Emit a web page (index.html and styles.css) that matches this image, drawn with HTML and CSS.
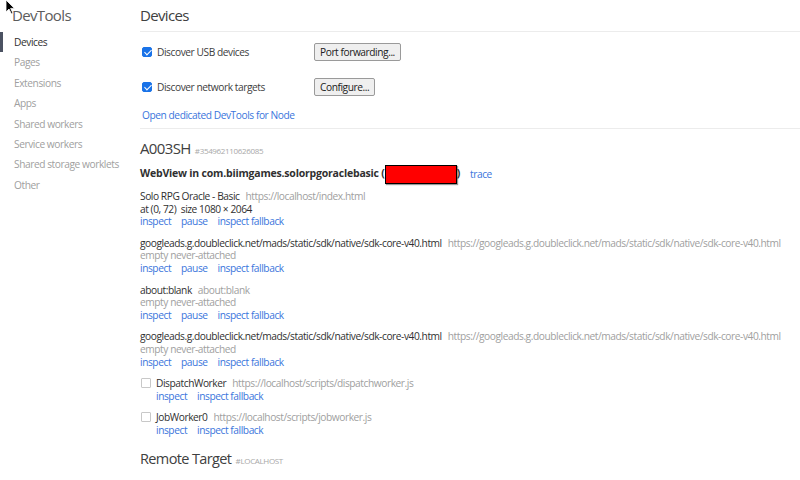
FILE: index.html
```html
<!DOCTYPE html>
<html lang="en">
<head>
    <meta charset="UTF-8">
    <title>Inspect with Chrome Developer Tools</title>
    <link rel="stylesheet" href="styles.css">
</head>
<body>
<div class="sidebar">
    <div class="sidebar-title">DevTools</div>
    <div class="nav-item selected">Devices</div>
    <div class="nav-item">Pages</div>
    <div class="nav-item">Extensions</div>
    <div class="nav-item">Apps</div>
    <div class="nav-item">Shared workers</div>
    <div class="nav-item">Service workers</div>
    <div class="nav-item">Shared storage worklets</div>
    <div class="nav-item">Other</div>
</div>

<div class="content">
    <div class="content-header">Devices</div>

    <div class="config-row first">
        <label class="checkbox-label"><span class="checkbox checked"></span>Discover USB devices</label>
        <span class="button">Port forwarding...</span>
    </div>
    <div class="config-row">
        <label class="checkbox-label"><span class="checkbox checked"></span>Discover network targets</label>
        <span class="button">Configure...</span>
    </div>
    <div class="node-link"><a href="#">Open dedicated DevTools for Node</a></div>

    <div class="device">
        <div class="device-header">
            <span class="device-name">A003SH</span>
            <span class="device-serial">#354962110626085</span>
        </div>
        <div class="browser-header">
            <span class="browser-name">WebView in com.biimgames.solorpgoraclebasic (<span class="redacted"></span>)</span>
            <a href="#" class="action">trace</a>
        </div>

        <div class="row">
            <div><span class="name">Solo RPG Oracle - Basic</span><span class="url">https://localhost/index.html</span></div>
            <div class="name">at (0, 72)&nbsp; size 1080 × 2064</div>
            <div class="actions"><a href="#">inspect</a><a href="#">pause</a><a href="#">inspect fallback</a></div>
        </div>
        <div class="row">
            <div><span class="name">googleads.g.doubleclick.net/mads/static/sdk/native/sdk-core-v40.html</span><span class="url">https://googleads.g.doubleclick.net/mads/static/sdk/native/sdk-core-v40.html</span></div>
            <div class="url">empty never-attached</div>
            <div class="actions"><a href="#">inspect</a><a href="#">pause</a><a href="#">inspect fallback</a></div>
        </div>
        <div class="row">
            <div><span class="name">about:blank</span><span class="url">about:blank</span></div>
            <div class="url">empty never-attached</div>
            <div class="actions"><a href="#">inspect</a><a href="#">pause</a><a href="#">inspect fallback</a></div>
        </div>
        <div class="row">
            <div><span class="name">googleads.g.doubleclick.net/mads/static/sdk/native/sdk-core-v40.html</span><span class="url">https://googleads.g.doubleclick.net/mads/static/sdk/native/sdk-core-v40.html</span></div>
            <div class="url">empty never-attached</div>
            <div class="actions"><a href="#">inspect</a><a href="#">pause</a><a href="#">inspect fallback</a></div>
        </div>

        <div class="row worker">
            <div><span class="checkbox"></span><span class="name">DispatchWorker</span><span class="url">https://localhost/scripts/dispatchworker.js</span></div>
            <div class="actions"><a href="#">inspect</a><a href="#">inspect fallback</a></div>
        </div>
        <div class="row worker">
            <div><span class="checkbox"></span><span class="name">JobWorker0</span><span class="url">https://localhost/scripts/jobworker.js</span></div>
            <div class="actions"><a href="#">inspect</a><a href="#">inspect fallback</a></div>
        </div>
    </div>

    <div class="device-header remote">
        <span class="device-name">Remote Target</span>
        <span class="device-serial">#LOCALHOST</span>
    </div>
</div>

<svg class="cursor" viewBox="0 0 12 16" xmlns="http://www.w3.org/2000/svg">
    <path d="M1 0 L1 12 L4 9 L6.5 14 L8 13.3 L5.6 8.4 L9.5 8.4 Z" fill="#000" stroke="#fff" stroke-width="0.8"></path>
</svg>
</body>
</html>
```

FILE: styles.css
```css
* {
    letter-spacing: -0.043em;
}

body {
    margin: 0;
    padding: 0;
    display: flex;
    font-family: "Open Sans", "Noto Sans", sans-serif;
    font-size: 10.2px;
    color: #303030;
    background: #fff;
    height: 480px;
    overflow: hidden;
}

a {
    color: #3a75dc;
    text-decoration: none;
}

/* Sidebar */
.sidebar {
    width: 130px;
    flex-shrink: 0;
}

.sidebar-title {
    font-size: 15px;
    line-height: 30px;
    padding-left: 12px;
    color: #5c5c5c;
    margin-bottom: 2px;
}

.nav-item {
    line-height: 20.4px;
    padding-left: 14px;
    color: #a0a0a0;
    white-space: nowrap;
}

.nav-item.selected {
    color: #303030;
    border-left: 3px solid #4b5262;
    padding-left: 11px;
}

/* Content */
.content {
    flex: 1;
    padding-left: 10px;
    min-width: 0;
}

.content-header {
    font-size: 15px;
    line-height: 31px;
    color: #404040;
    border-bottom: 1px solid #ececec;
}

.config-row {
    display: flex;
    align-items: center;
    height: 18px;
    margin-top: 17px;
    padding-left: 2px;
}

.config-row.first {
    margin-top: 11px;
}

.checkbox-label {
    display: flex;
    align-items: center;
    width: 172px;
    color: #404040;
}

.checkbox {
    display: inline-block;
    box-sizing: border-box;
    width: 10px;
    height: 10px;
    border: 1px solid #c8c8c8;
    border-radius: 1px;
    background: #fff;
    margin-right: 5px;
    vertical-align: -1px;
    position: relative;
}

.checkbox.checked {
    background: #1a73e8;
    border-color: #1a73e8;
    border-radius: 2px;
}

.checkbox.checked::after {
    content: '';
    position: absolute;
    left: 2.5px;
    top: 0px;
    width: 3px;
    height: 6px;
    border: solid #fff;
    border-width: 0 1.5px 1.5px 0;
    transform: rotate(45deg);
}

.button {
    display: inline-block;
    box-sizing: border-box;
    height: 18px;
    line-height: 16px;
    padding: 0 5px;
    border: 1px solid #9a9a9a;
    border-radius: 2px;
    background: #efefef;
    color: #202020;
}

.node-link {
    line-height: 13px;
    margin-top: 13px;
    padding-left: 2px;
    padding-bottom: 6px;
    border-bottom: 1px solid #ececec;
}

/* Device */
.device-header {
    height: 20px;
    line-height: 20px;
    margin-top: 9px;
}

.device-name {
    font-size: 15px;
    color: #404040;
}

.device-serial {
    font-size: 8px;
    color: #a8a8a8;
    margin-left: 2px;
}

.browser-header {
    display: flex;
    align-items: center;
    height: 20px;
    margin-top: 6px;
}

.browser-name {
    font-weight: bold;
    font-size: 10.5px;
    color: #303030;
}

.browser-name,
.browser-name * {
    letter-spacing: -0.2px;
}

.redacted {
    display: inline-block;
    width: 70px;
    height: 17px;
    background: #ff0000;
    border: 1px solid #000;
    vertical-align: middle;
    box-shadow: 1px 1px 1px rgba(0, 0, 0, 0.4);
}

.browser-header .action {
    margin-left: 10px;
}

.row {
    line-height: 12.6px;
    margin-top: 9px;
    white-space: nowrap;
}

.browser-header + .row {
    margin-top: 6px;
}

.row .name {
    color: #303030;
}

.row .url {
    color: #a0a0a0;
    margin-left: 6px;
}

.row div.url {
    margin-left: 0;
}

.actions a {
    margin-right: 10px;
}

.row.worker .checkbox {
    margin-left: 1px;
    margin-right: 5px;
}

.row.worker .actions {
    padding-left: 16px;
}

.device-header.remote {
    margin-top: 12px;
}

.remote .device-name {
    font-size: 14.5px;
}

.cursor {
    position: absolute;
    left: 5px;
    top: 0;
    width: 12px;
    height: 16px;
}
```
